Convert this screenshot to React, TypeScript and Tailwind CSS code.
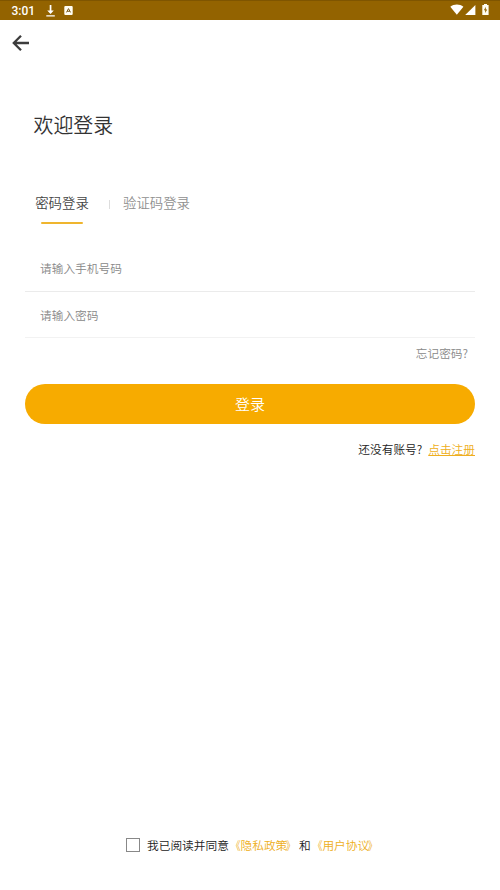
import React, { useState } from 'react';

const StatusBar = () => {
  return <div className="flex h-5 items-center justify-between border-t border-[#7f5500] bg-[#936300] pl-[11.5px] pr-[11px] text-white">
      <div className="flex items-center">
        <span className="w-[34.5px] font-[Roboto] text-[12px] font-medium leading-none">3:01</span>
        <svg className="h-[12px] w-[9px]" viewBox="0 0 9 12" fill="currentColor">
          <path d="M3.7 0h1.7v5.6h2.4L4.55 9 1.2 5.6h2.5zM0.3 10.2h8.5v1.4H0.3z" />
        </svg>
        <svg className="ml-[9px] h-[9px] w-[9px]" viewBox="0 0 9 9">
          <rect x="0.3" y="0" width="8.4" height="9" rx="1" fill="#fffdf2" />
          <path d="M2.5 6.4 4.5 2.6 6.5 6.4M3.2 5.3h2.6" fill="none" stroke="#7a5a1c" strokeWidth="1" />
        </svg>
      </div>
      <div className="mb-[2px] flex items-center">
        <svg className="h-[11px] w-[14px]" viewBox="0 0 14 11" fill="currentColor">
          <path d="M0.3 2.7C4-.4 9.7-.4 13.4 2.7L6.85 10.8z" />
        </svg>
        <svg className="ml-px h-[10px] w-[11px]" viewBox="0 0 11 10" fill="currentColor">
          <path d="M10.4 0v10H0.2z" />
        </svg>
        <svg className="ml-[5.5px] mr-[0.5px] h-[11px] w-[7px]" viewBox="0 0 7 11">
          <path d="M2 0h3v1h1.6v10H0.3V1H2z" fill="#fffdf2" />
          <path d="M3.8 2.8 1.9 6.3h1.3v2.6l2-3.5H3.8z" fill="#936300" />
        </svg>
      </div>
    </div>;
};

const DocLink = ({ title }: { title: string }) => {
  return <a className="text-[#eeae20]">
      <span className="inline-block origin-right scale-x-[0.85]">《</span>
      {title}
      <span className="inline-block origin-left -translate-x-[1.5px] scale-x-[0.85]">》</span>
    </a>;
};

const App = () => {
  const [agreed, setAgreed] = useState(false);

  return <div className="flex h-[890px] w-[500px] flex-col bg-white font-['Noto_Sans_CJK_SC',sans-serif] font-[350] text-[#333]">
      <StatusBar />

      <button className="ml-[12px] mt-[14px] h-[18px] w-[18px]" aria-label="返回">
        <svg className="h-[18px] w-[18px]" viewBox="0 0 18 18" fill="none" stroke="#3c3c3c" strokeWidth="2.3">
          <path d="M17 9H2.2M9 1.8 1.8 9 9 16.2" />
        </svg>
      </button>

      <h1 className="ml-[33.5px] mt-[58px] text-[19.9px] font-[350] leading-[30px]">欢迎登录</h1>

      <div className="ml-[35px] mt-[52px] flex h-[31px] items-start text-[13.4px] leading-[20px]">
        <div className="flex w-[54px] flex-col items-center">
          <span className="whitespace-nowrap text-[#444]">密码登录</span>
          <span className="mt-[10px] h-[2px] w-[42px] rounded-full bg-[#efb52e]"></span>
        </div>
        <span className="ml-[20px] mt-[8px] h-[9px] w-px bg-[#ddd]"></span>
        <span className="ml-[13px] whitespace-nowrap text-[#8f8f8f]">验证码登录</span>
      </div>

      {/* Form */}
      <div className="mx-[25px] text-[11.7px]">
        <div className="mt-[21px] flex h-[48px] items-center border-b border-[#ebebeb] pl-[15px] text-[#888]">请输入手机号码</div>
        <div className="flex h-[46px] items-center border-b border-[#f2f2f2] pl-[15px] text-[#888]">请输入密码</div>
        <div className="mt-[5px] pr-[7px] text-right leading-[20px] text-[#888]">忘记密码?</div>
        <button className="mt-[21px] block h-[40px] w-full rounded-full bg-[#f7ab00] text-[15px] leading-[40px] text-white">登录</button>
        <div className="mt-[15px] flex justify-end leading-[20px] text-[#222]">
          <span className="mr-[6px]">还没有账号?</span>
          <a className="text-[#eeae20] underline">点击注册</a>
        </div>
      </div>

      <div className="mb-[35px] ml-[126px] mt-auto flex h-[20px] items-center whitespace-nowrap text-[11.7px] leading-[20px] text-[#222]">
        <button className="mr-[7px] h-[14px] w-[14px] border border-[#888]" aria-label="同意" onClick={() => setAgreed(!agreed)}>
          {agreed && <span className="block h-full w-full bg-[#f7ab00]"></span>}
        </button>
        <span>我已阅读并同意</span>
        <DocLink title="隐私政策" />
        <span>和</span>
        <DocLink title="用户协议" />
      </div>
    </div>;
};

export default App;
